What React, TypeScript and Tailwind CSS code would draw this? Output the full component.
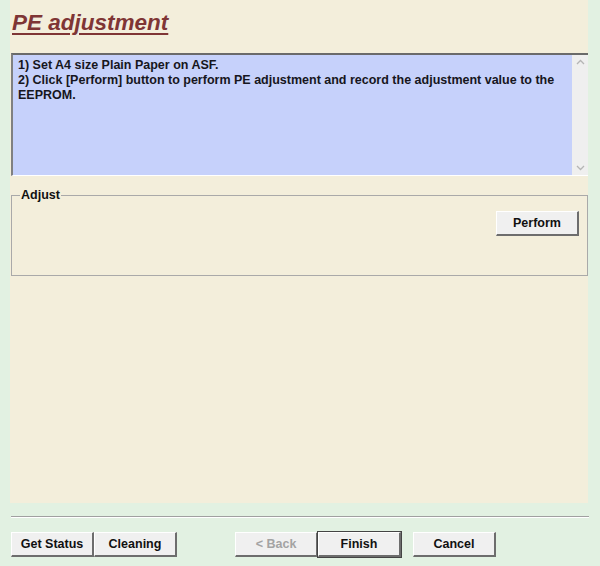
import React from 'react';

const font = { fontFamily: '"Liberation Sans", Arial, sans-serif' };

// classic 3D push button
function WinButton({ label, disabled, isDefault, className = '' }: { label: string; disabled?: boolean; isDefault?: boolean; className?: string }) {
  return (
    <button
      className={`h-[25px] w-[83px] bg-[#f0f0f0] text-[12.5px] font-bold border-t border-l border-t-white border-l-white border-b-2 border-r-2 border-b-[#6d6d6d] border-r-[#6d6d6d] ${isDefault ? 'outline outline-1 outline-[#444]' : ''} ${disabled ? 'text-[#a3a3a3]' : 'text-[#111]'} ${className}`}
    >
      {label}
    </button>
  );
}

export default function App() {
  return (
    <div className="w-[600px] h-[566px] bg-[#e2f1e2] flex flex-col" style={font}>
      {/* Main panel */}
      <div className="mx-[10px] w-[578px] h-[503px] bg-[#f3eedb] flex flex-col">
        <h1 className="mt-[9px] ml-[2px] text-[22.5px] leading-[27px] font-bold italic underline decoration-2 underline-offset-[3px] text-[#7f3535]">
          PE adjustment
        </h1>

        {/* Instructions box */}
        <div className="mt-[17px] ml-[1px] w-[577px] h-[123px] flex border-t-2 border-l-2 border-t-[#6a6a6a] border-l-[#808080] border-b border-b-white">
          <div className="flex-1 bg-[#c6d1fb] px-[5px] pt-[3px] text-[12.5px] leading-[15px] font-bold text-[#161620]">
            <p>1) Set A4 size Plain Paper on ASF.</p>
            <p>2) Click [Perform] button to perform PE adjustment and record the adjustment value to the EEPROM.</p>
          </div>
          <div className="w-[16px] bg-[#efefef] flex flex-col items-center justify-between py-[4px] text-[#b5b5b5]">
            <svg width="9" height="6" viewBox="0 0 9 6"><path d="M1 5 L4.5 1.5 L8 5" fill="none" stroke="currentColor" strokeWidth="1.3" /></svg>
            <svg width="9" height="6" viewBox="0 0 9 6"><path d="M1 1 L4.5 4.5 L8 1" fill="none" stroke="currentColor" strokeWidth="1.3" /></svg>
          </div>
        </div>

        {/* Adjust group */}
        <fieldset className="mt-[12px] ml-[1px] w-[577px] h-[88px] border border-[#a9a9a9] px-[8px] pt-0">
          <legend className="text-[12.5px] font-bold text-[#111] px-[1px] leading-[15px]">Adjust</legend>
          <div className="flex justify-end mt-[8px]">
            <WinButton label="Perform" />
          </div>
        </fieldset>
      </div>

      {/* Separator */}
      <div className="mx-[11px] mt-[13px] h-[2px] border-t border-t-[#a0a0a0] border-b border-b-white" />

      {/* Bottom buttons */}
      <div className="ml-[11px] mt-[14px] flex">
        <WinButton label="Get Status" />
        <WinButton label="Cleaning" />
        <WinButton label="< Back" disabled className="ml-[58px]" />
        <WinButton label="Finish" isDefault />
        <WinButton label="Cancel" className="ml-[12px]" />
      </div>
    </div>
  );
}
